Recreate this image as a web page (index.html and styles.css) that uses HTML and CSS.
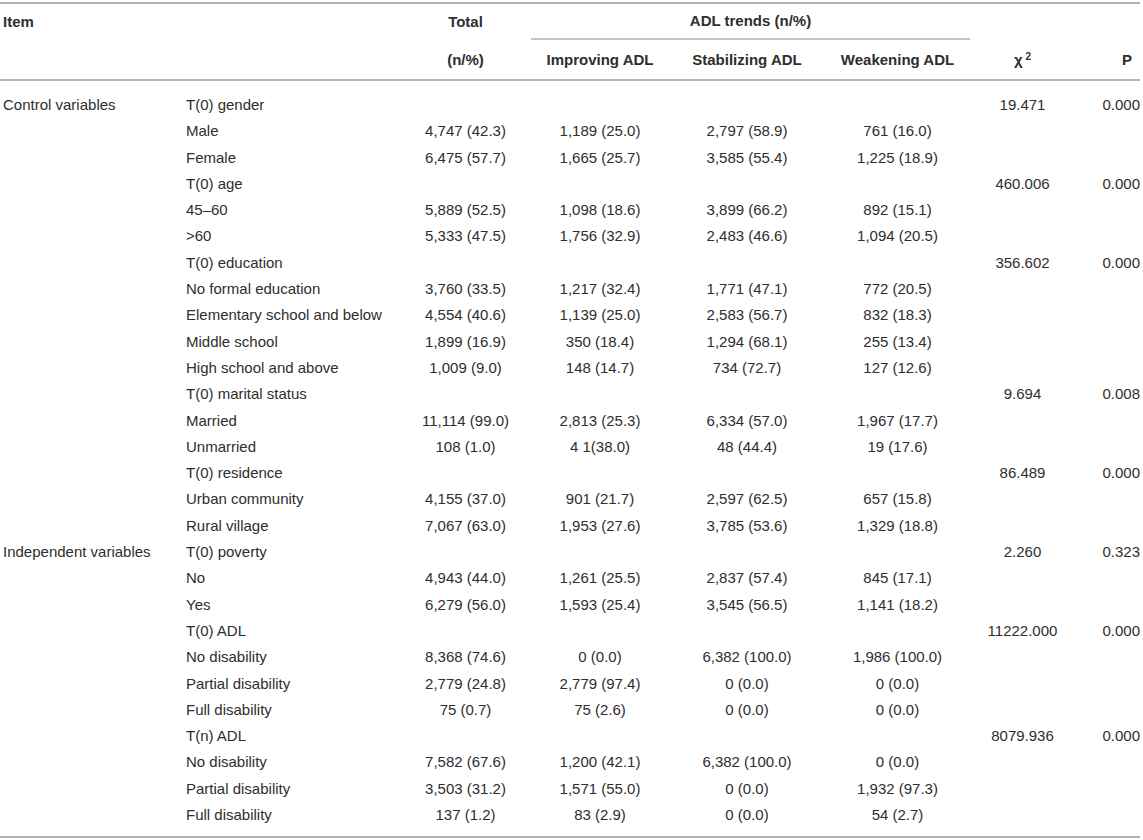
FILE: index.html
```html
<!DOCTYPE html>
<html lang="en">

<head>
    <meta charset="UTF-8">
    <meta name="viewport" content="width=device-width, initial-scale=1.0">
    <title>ADL trends</title>
    <link rel="stylesheet" href="styles.css">
</head>

<body>
    <table class="adl-table">
        <colgroup>
            <col class="c-item">
            <col class="c-sub">
            <col class="c-total">
            <col class="c-imp">
            <col class="c-stab">
            <col class="c-weak">
            <col class="c-chi">
            <col class="c-p">
        </colgroup>
        <thead>
            <tr class="head-top">
                <th class="left">Item</th>
                <th></th>
                <th>Total</th>
                <th colspan="3" class="group">ADL trends (n/%)</th>
                <th></th>
                <th></th>
            </tr>
            <tr class="head-bottom">
                <th></th>
                <th></th>
                <th>(n/%)</th>
                <th>Improving ADL</th>
                <th>Stabilizing ADL</th>
                <th>Weakening ADL</th>
                <th>χ<sup>2</sup></th>
                <th class="p">P</th>
            </tr>
        </thead>
        <tbody>
            <tr class="first">
                <td>Control variables</td><td>T(0) gender</td><td></td><td></td><td></td><td></td><td>19.471</td><td class="p">0.000</td>
            </tr>
            <tr>
                <td></td><td>Male</td><td>4,747 (42.3)</td><td>1,189 (25.0)</td><td>2,797 (58.9)</td><td>761 (16.0)</td><td></td><td></td>
            </tr>
            <tr>
                <td></td><td>Female</td><td>6,475 (57.7)</td><td>1,665 (25.7)</td><td>3,585 (55.4)</td><td>1,225 (18.9)</td><td></td><td></td>
            </tr>
            <tr>
                <td></td><td>T(0) age</td><td></td><td></td><td></td><td></td><td>460.006</td><td class="p">0.000</td>
            </tr>
            <tr>
                <td></td><td>45–60</td><td>5,889 (52.5)</td><td>1,098 (18.6)</td><td>3,899 (66.2)</td><td>892 (15.1)</td><td></td><td></td>
            </tr>
            <tr>
                <td></td><td>&gt;60</td><td>5,333 (47.5)</td><td>1,756 (32.9)</td><td>2,483 (46.6)</td><td>1,094 (20.5)</td><td></td><td></td>
            </tr>
            <tr>
                <td></td><td>T(0) education</td><td></td><td></td><td></td><td></td><td>356.602</td><td class="p">0.000</td>
            </tr>
            <tr>
                <td></td><td>No formal education</td><td>3,760 (33.5)</td><td>1,217 (32.4)</td><td>1,771 (47.1)</td><td>772 (20.5)</td><td></td><td></td>
            </tr>
            <tr>
                <td></td><td>Elementary school and below</td><td>4,554 (40.6)</td><td>1,139 (25.0)</td><td>2,583 (56.7)</td><td>832 (18.3)</td><td></td><td></td>
            </tr>
            <tr>
                <td></td><td>Middle school</td><td>1,899 (16.9)</td><td>350 (18.4)</td><td>1,294 (68.1)</td><td>255 (13.4)</td><td></td><td></td>
            </tr>
            <tr>
                <td></td><td>High school and above</td><td>1,009 (9.0)</td><td>148 (14.7)</td><td>734 (72.7)</td><td>127 (12.6)</td><td></td><td></td>
            </tr>
            <tr>
                <td></td><td>T(0) marital status</td><td></td><td></td><td></td><td></td><td>9.694</td><td class="p">0.008</td>
            </tr>
            <tr>
                <td></td><td>Married</td><td>11,114 (99.0)</td><td>2,813 (25.3)</td><td>6,334 (57.0)</td><td>1,967 (17.7)</td><td></td><td></td>
            </tr>
            <tr>
                <td></td><td>Unmarried</td><td>108 (1.0)</td><td>4 1(38.0)</td><td>48 (44.4)</td><td>19 (17.6)</td><td></td><td></td>
            </tr>
            <tr>
                <td></td><td>T(0) residence</td><td></td><td></td><td></td><td></td><td>86.489</td><td class="p">0.000</td>
            </tr>
            <tr>
                <td></td><td>Urban community</td><td>4,155 (37.0)</td><td>901 (21.7)</td><td>2,597 (62.5)</td><td>657 (15.8)</td><td></td><td></td>
            </tr>
            <tr>
                <td></td><td>Rural village</td><td>7,067 (63.0)</td><td>1,953 (27.6)</td><td>3,785 (53.6)</td><td>1,329 (18.8)</td><td></td><td></td>
            </tr>
            <tr>
                <td>Independent variables</td><td>T(0) poverty</td><td></td><td></td><td></td><td></td><td>2.260</td><td class="p">0.323</td>
            </tr>
            <tr>
                <td></td><td>No</td><td>4,943 (44.0)</td><td>1,261 (25.5)</td><td>2,837 (57.4)</td><td>845 (17.1)</td><td></td><td></td>
            </tr>
            <tr>
                <td></td><td>Yes</td><td>6,279 (56.0)</td><td>1,593 (25.4)</td><td>3,545 (56.5)</td><td>1,141 (18.2)</td><td></td><td></td>
            </tr>
            <tr>
                <td></td><td>T(0) ADL</td><td></td><td></td><td></td><td></td><td>11222.000</td><td class="p">0.000</td>
            </tr>
            <tr>
                <td></td><td>No disability</td><td>8,368 (74.6)</td><td>0 (0.0)</td><td>6,382 (100.0)</td><td>1,986 (100.0)</td><td></td><td></td>
            </tr>
            <tr>
                <td></td><td>Partial disability</td><td>2,779 (24.8)</td><td>2,779 (97.4)</td><td>0 (0.0)</td><td>0 (0.0)</td><td></td><td></td>
            </tr>
            <tr>
                <td></td><td>Full disability</td><td>75 (0.7)</td><td>75 (2.6)</td><td>0 (0.0)</td><td>0 (0.0)</td><td></td><td></td>
            </tr>
            <tr>
                <td></td><td>T(n) ADL</td><td></td><td></td><td></td><td></td><td>8079.936</td><td class="p">0.000</td>
            </tr>
            <tr>
                <td></td><td>No disability</td><td>7,582 (67.6)</td><td>1,200 (42.1)</td><td>6,382 (100.0)</td><td>0 (0.0)</td><td></td><td></td>
            </tr>
            <tr>
                <td></td><td>Partial disability</td><td>3,503 (31.2)</td><td>1,571 (55.0)</td><td>0 (0.0)</td><td>1,932 (97.3)</td><td></td><td></td>
            </tr>
            <tr class="last">
                <td></td><td>Full disability</td><td>137 (1.2)</td><td>83 (2.9)</td><td>0 (0.0)</td><td>54 (2.7)</td><td></td><td></td>
            </tr>
        </tbody>
    </table>
</body>

</html>
```

FILE: styles.css
```css
* {
    margin: 0;
    padding: 0;
    box-sizing: border-box;
}

body {
    background: #fff;
    font-family: "Liberation Sans", Arial, Helvetica, sans-serif;
    font-size: 15px;
    color: #2e2e2e;
}

.adl-table {
    margin-top: 2px;
    width: 1140px;
    table-layout: fixed;
    border-collapse: separate;
    border-spacing: 0;
    border-top: 2px solid #b4b4b4;
    border-bottom: 2px solid #b4b4b4;
}

.c-item { width: 186px; }
.c-sub { width: 214px; }
.c-total { width: 131px; }
.c-imp { width: 138px; }
.c-stab { width: 156px; }
.c-weak { width: 145px; }
.c-chi { width: 105px; }
.c-p { width: 65px; }

.adl-table th {
    font-weight: bold;
    text-align: center;
    white-space: nowrap;
    padding: 0;
}

.adl-table th.left {
    text-align: left;
    padding-left: 3px;
}

.head-top th {
    line-height: 36px;
}

.head-top th.group {
    line-height: 34px;
    border-bottom: 2px solid #c4c4c4;
}

.head-bottom th {
    line-height: 39px;
    border-bottom: 2px solid #b4b4b4;
}

.adl-table th.p {
    text-align: right;
    padding-right: 8px;
}

.adl-table sup {
    font-size: 10px;
    margin-left: 3px;
    vertical-align: 5px;
    line-height: 0;
}

.adl-table td {
    line-height: 26.3px;
    white-space: nowrap;
    text-align: center;
    padding: 0;
}

.adl-table td:first-child {
    text-align: left;
    padding-left: 3px;
}

.adl-table td:nth-child(2) {
    text-align: left;
}

.adl-table td.p {
    text-align: right;
}

.adl-table tr.first td {
    padding-top: 11px;
}

.adl-table tr.last td {
    padding-bottom: 8px;
}
```
